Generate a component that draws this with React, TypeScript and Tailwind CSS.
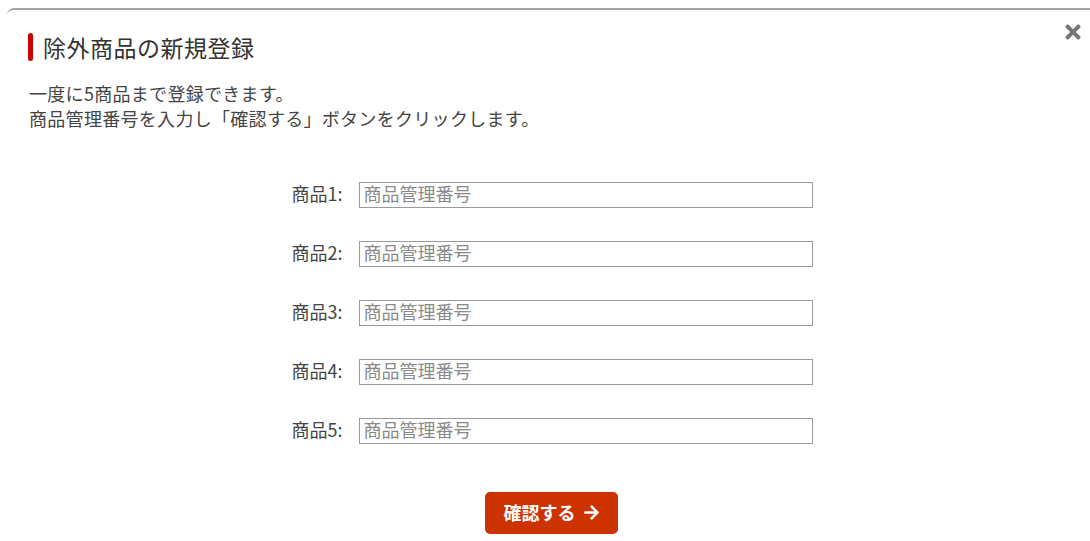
import React from "react";
import { FaTimes, FaArrowRight } from "react-icons/fa";

const font = { fontFamily: '"Meiryo", "Noto Sans CJK JP", "Noto Sans", sans-serif' };

export default function App() {
  const rows = [1, 2, 3, 4, 5];
  return (
    <div className="w-[1090px] h-[541px] overflow-hidden bg-white" style={font}>
      <div className="pt-2 pl-[7px] w-[1096px]">
        <div className="relative h-[533px] border-t-2 border-[#a3a3a3] rounded-tl-[7px] text-[#3a3a3a]">
          <button className="absolute right-[12px] top-[11px] text-[#777]">
            <FaTimes className="w-[22px] h-[22px]" />
          </button>
          <div className="flex items-center pl-[21px] mt-[23px]">
            <span className="block w-[5px] h-[28px] rounded-full bg-[#cc0000]" />
            <h1 className="ml-[10px] text-[23px] tracking-[0.5px] leading-[28px] text-[#333] font-normal">除外商品の新規登録</h1>
          </div>
          <div className="mt-[20px] pl-[22px] text-[18px] tracking-[0.3px] leading-[25px] text-[#444]">
            <p>一度に5商品まで登録できます。</p>
            <p>商品管理番号を入力し「確認する」ボタンをクリックします。</p>
          </div>
          <div className="mt-[51px] flex flex-col items-center gap-[33px]">
            {rows.map((n) => (
              <div key={n} className="flex items-start h-[26px]">
                <label className="w-[68px] h-[26px] pl-[1px] text-[18px] text-[#444] leading-[22px]">商品{n}:</label>
                <input
                  className="w-[454px] h-[26px] border border-[#999] px-[4px] pb-[4px] text-[18px] leading-[20px] outline-none placeholder:text-[#8a8a8a]"
                  style={font}
                  placeholder="商品管理番号"
                />
              </div>
            ))}
          </div>
          <div className="mt-[48px] flex justify-center">
            <button className="flex items-center gap-[7px] h-[42px] w-[133px] justify-center rounded-[5px] bg-[#cc3300] text-white text-[18px] font-bold pb-[2px]">
              確認する
              <FaArrowRight className="w-[17px] h-[17px]" />
            </button>
          </div>
        </div>
      </div>
    </div>
  );
}
